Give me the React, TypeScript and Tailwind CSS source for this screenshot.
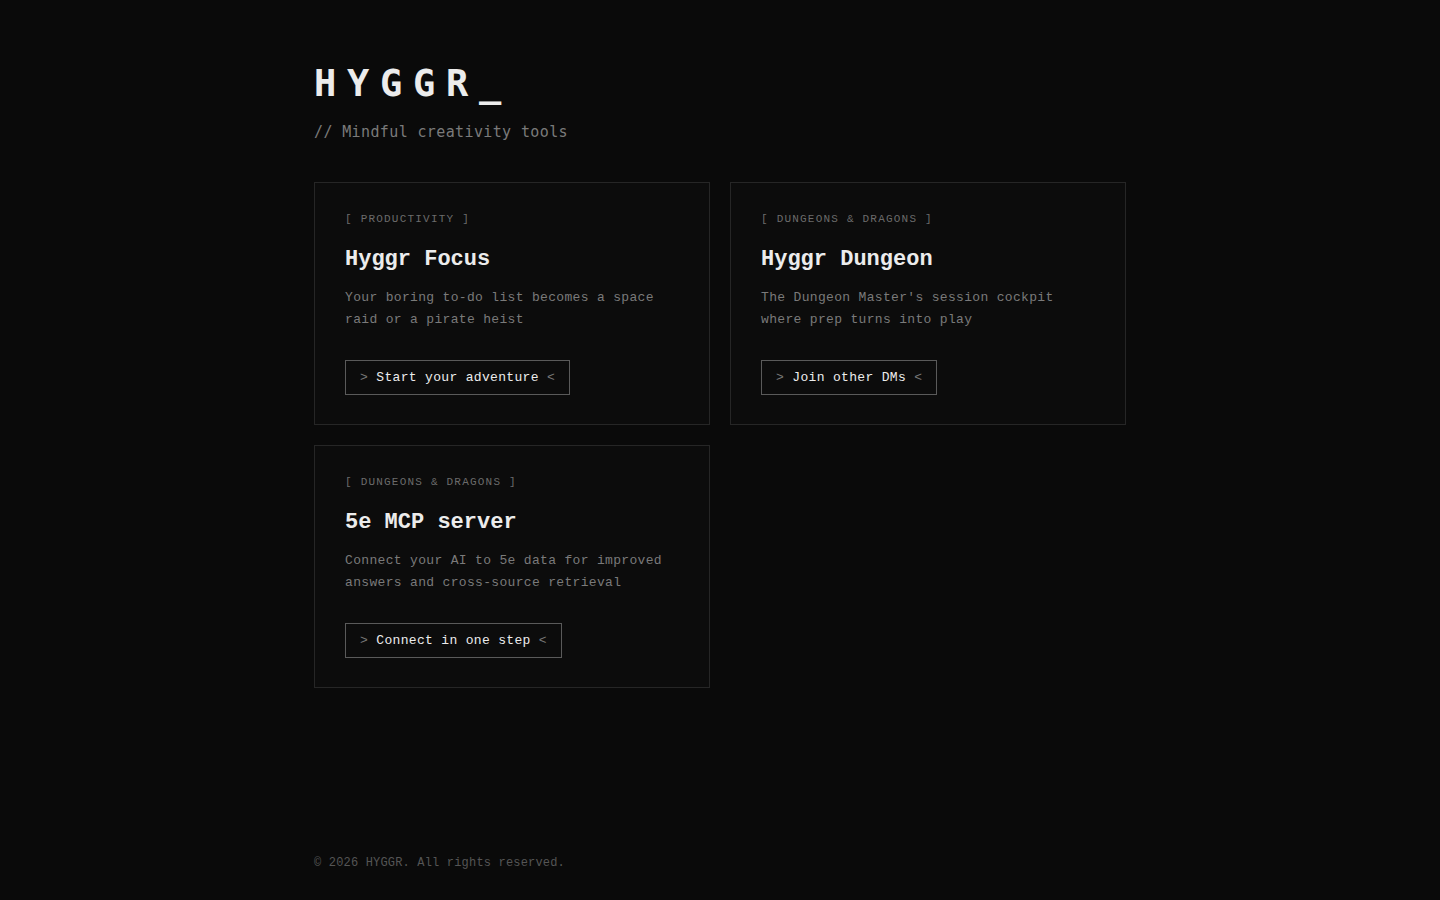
import React from 'react';

type Tool = {
  tag: string;
  name: string;
  blurb: string;
  cta: string;
};

const tools: Tool[] = [
  {
    tag: 'PRODUCTIVITY',
    name: 'Hyggr Focus',
    blurb: 'Your boring to-do list becomes a space raid or a pirate heist',
    cta: 'Start your adventure',
  },
  {
    tag: 'DUNGEONS & DRAGONS',
    name: 'Hyggr Dungeon',
    blurb: "The Dungeon Master's session cockpit where prep turns into play",
    cta: 'Join other DMs',
  },
  {
    tag: 'DUNGEONS & DRAGONS',
    name: '5e MCP server',
    blurb: 'Connect your AI to 5e data for improved answers and cross-source retrieval',
    cta: 'Connect in one step',
  },
];

const ToolCard: React.FC<{ tool: Tool }> = ({ tool }) => (
  <div className="bg-[#0c0c0c] border border-[#262626] px-[30px] pt-[30px] pb-[29px] flex flex-col">
    <div className="text-[11px] leading-[12px] tracking-[0.11em] text-[#6b6b6b]">
      [ {tool.tag} ]
    </div>
    <h3 className="mt-[21px] text-[22px] leading-[28px] font-bold text-[#ececec]">{tool.name}</h3>
    <p className="mt-[13px] text-[13px] leading-[22px] tracking-[0.025em] text-[#7a7a7a]">{tool.blurb}</p>
    <div className="mt-[29px]">
      <a
        href="#"
        className="inline-block border border-[#5a5a5a] px-[14px] py-2 text-[13px] leading-[17px] tracking-[0.025em] text-[#ededed] hover:bg-[#161616] transition-colors"
      >
        <span className="text-[#777]">&gt;</span> {tool.cta} <span className="text-[#777]">&lt;</span>
      </a>
    </div>
  </div>
);

export default function App() {
  return (
    <div
      className="min-h-screen bg-[#0a0a0a] flex flex-col"
      style={{ fontFamily: '"Liberation Mono", "Courier New", monospace' }}
    >
      <main className="flex-1 w-full max-w-[812px] mx-auto pt-16">
        <header className="font-['DejaVu_Sans_Mono',monospace]">
          <h1 className="text-[37px] leading-[40px] font-bold tracking-[0.29em] text-[#ececec]">HYGGR_</h1>
          <p className="mt-4 text-[15px] leading-6 tracking-[0.025em] text-[#7a7a7a]">// Mindful creativity tools</p>
        </header>

        <div className="mt-[38px] grid grid-cols-2 gap-5">
          {tools.map((t) => (
            <ToolCard key={t.name} tool={t} />
          ))}
        </div>
      </main>

      <footer className="w-full max-w-[812px] mx-auto pb-[29px]">
        <p className="text-[12px] leading-4 tracking-[0.015em] text-[#555]">© 2026 HYGGR. All rights reserved.</p>
      </footer>
    </div>
  );
}
